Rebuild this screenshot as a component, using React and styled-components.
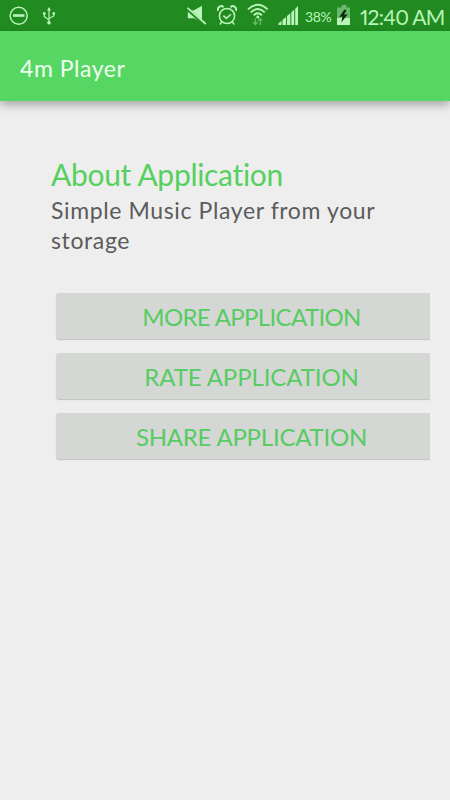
import React from "react";
import styled, { createGlobalStyle } from "styled-components";

const GlobalStyle = createGlobalStyle`
  *, *::before, *::after { box-sizing: border-box; }
  body { margin: 0; background: #eee; overflow: hidden; }
`;

const Screen = styled.div`
  width: 450px;
  height: 800px;
  display: flex;
  flex-direction: column;
  background: #eeeeee;
  font-family: Lato, sans-serif;
  font-variant-ligatures: none;
`;

const StatusBar = styled.header`
  height: 31px;
  flex: none;
  display: flex;
  align-items: flex-start;
  background: #218b21;
  color: #b9f5b8;
`;

const StatusIcon = styled.svg`
  flex: none;
  display: block;
  width: ${(p) => p.$w}px;
  height: 31px;
  margin-left: ${(p) => p.$gap}px;
  fill: none;
  stroke: currentColor;
`;

const Battery = styled.span`
  width: 27px;
  margin-left: 6px;
  font-size: 14px;
  line-height: 34px;
  white-space: nowrap;
  letter-spacing: -0.4px;
`;

const Clock = styled.time`
  margin-left: 10px;
  font-size: 21px;
  font-variant-numeric: proportional-nums;
  line-height: 33px;
  white-space: nowrap;
  letter-spacing: -0.7px;
`;

const AppBar = styled.div`
  height: 70px;
  flex: none;
  display: flex;
  align-items: center;
  padding: 4px 20px 0;
  background: #56d763;
  box-shadow: 0 4px 9px rgba(0, 0, 0, 0.3);
`;

const AppTitle = styled.h1`
  margin: 0;
  color: #f1fff1;
  font-size: 23px;
  font-weight: 400;
  line-height: 30px;
  letter-spacing: 0.55px;
`;

const Content = styled.main`
  flex: 1;
  padding: 53px 20px 0 51px;
`;

const Heading = styled.h2`
  margin: 0;
  color: #56d05f;
  font-size: 30px;
  font-weight: 400;
  line-height: 40px;
  letter-spacing: -0.3px;
  white-space: nowrap;
`;

const Description = styled.p`
  margin: 0;
  padding-top: 1px;
  color: #5b5b5b;
  font-size: 23px;
  font-weight: 400;
  line-height: 30px;
  letter-spacing: 0.62px;
  white-space: nowrap;
`;

const Actions = styled.div`
  display: flex;
  flex-direction: column;
  gap: 14px;
  margin: 38px 0 0 5px;
`;

const Action = styled.button`
  height: 46px;
  border: 0;
  border-radius: 3px 0 0 3px;
  padding: 1px 0 0 17px;
  background: #d5d7d5;
  box-shadow: 0 1px 1px #bfc1bf;
  clip-path: inset(-1px 0 -2px -1px);
  color: #56cc62;
  font: 400 24px/30px Lato, sans-serif;
  letter-spacing: ${(p) => p.$spacing}px;
  white-space: nowrap;
`;

const actions = [
  { label: "MORE APPLICATION", spacing: -0.65 },
  { label: "RATE APPLICATION", spacing: -0.1 },
  { label: "SHARE APPLICATION", spacing: -0.22 },
];

export default function App() {
  return (
    <>
      <GlobalStyle />
      <Screen>
        <StatusBar>
          <StatusIcon $w={20} $gap={9} viewBox="0 0 20 31">
            <circle cx="9.7" cy="15.7" r="8.5" strokeWidth="1.5" />
            <path d="M4 15.5h11.5" strokeWidth="2.6" />
          </StatusIcon>
          <StatusIcon $w={14} $gap={13} viewBox="0 0 14 31">
            <path d="M7 10v13M2.2 14v2.5L7 20M11.8 14v2L7 18.5" strokeWidth="1.2" />
            <path d="M7 7l2 3.6H5zM1 12.2h2.6v2.5H1zM10.5 12.2H13v2.5h-2.5z" fill="currentColor" stroke="none" />
            <circle cx="7" cy="22.7" r="1.8" fill="currentColor" stroke="none" />
          </StatusIcon>
          <StatusIcon $w={20} $gap={131} viewBox="0 0 20 31">
            <path d="M.8 10.5h5.7L15 5.8v17L7 18.2H.8z" fill="currentColor" stroke="none" />
            <path d="M.5 9L18.4 25" stroke="#218b21" strokeWidth="3.6" />
            <path d="M.5 7.8L18.8 24" strokeWidth="1.8" />
          </StatusIcon>
          <StatusIcon $w={20} $gap={10} viewBox="0 0 20 31">
            <circle cx="10" cy="16" r="7.6" strokeWidth="1.5" />
            <path d="M6.4 15.6l3 2.8 4.5-4.2M4.5 22L3 24.5M15.5 22l1.7 2.5" strokeWidth="1.5" />
            <path d="M1.3 10.8a3.2 3.2 0 0 1 5.2-3.6M18.7 10.8a3.2 3.2 0 0 0-5.2-3.6" strokeWidth="2" />
          </StatusIcon>
          <StatusIcon $w={22} $gap={10} viewBox="0 0 22 31">
            <path d="M1 9.4Q10.8.2 20.6 9.4M3.8 12.4Q10.8 5.8 17.8 12.4M6.7 15.2Q10.8 11.5 14.9 15.2" strokeWidth="1.9" />
            <circle cx="10.8" cy="17" r="1.5" fill="currentColor" stroke="none" />
            <path d="M8.4 18.2v6.3M6.2 22.3l2.2 2.3 2.2-2.3M13.3 25v-6.3M11.2 20.8l2.1-2.2 2.1 2.2" stroke="#69b968" strokeWidth="1.3" />
          </StatusIcon>
          <StatusIcon $w={21} $gap={9} viewBox="0 0 21 31">
            <path d="M.5 25v-1.8L3.5 21V25zM4.5 25v-5L8 17v8zM9 25v-9l3.3-2.8V25zM13.3 25V12.2l2.9-2.5V25zM17.2 25V8.7L20 6v19z" fill="currentColor" stroke="none" />
          </StatusIcon>
          <Battery>38%</Battery>
          <StatusIcon $w={13} $gap={5} viewBox="0 0 13 31">
            <path d="M4.5 5h5v2.5H13V25H0V7.5h4.5z" fill="#68b96b" stroke="none" />
            <path d="M0 18h13v7H0z" fill="currentColor" stroke="none" />
            <path d="M7.2 9.8L2.3 17l3.2-.5-1.2 6 6.4-8.2-3.7.5 2.5-4.7z" fill="#092c0b" stroke="none" />
          </StatusIcon>
          <Clock>12:40 AM</Clock>
        </StatusBar>
        <AppBar>
          <AppTitle>4m Player</AppTitle>
        </AppBar>
        <Content>
          <Heading>About Application</Heading>
          <Description>
            Simple Music Player from your
            <br />
            storage
          </Description>
          <Actions>
            {actions.map(({ label, spacing }) => (
              <Action key={label} type="button" $spacing={spacing}>
                {label}
              </Action>
            ))}
          </Actions>
        </Content>
      </Screen>
    </>
  );
}
